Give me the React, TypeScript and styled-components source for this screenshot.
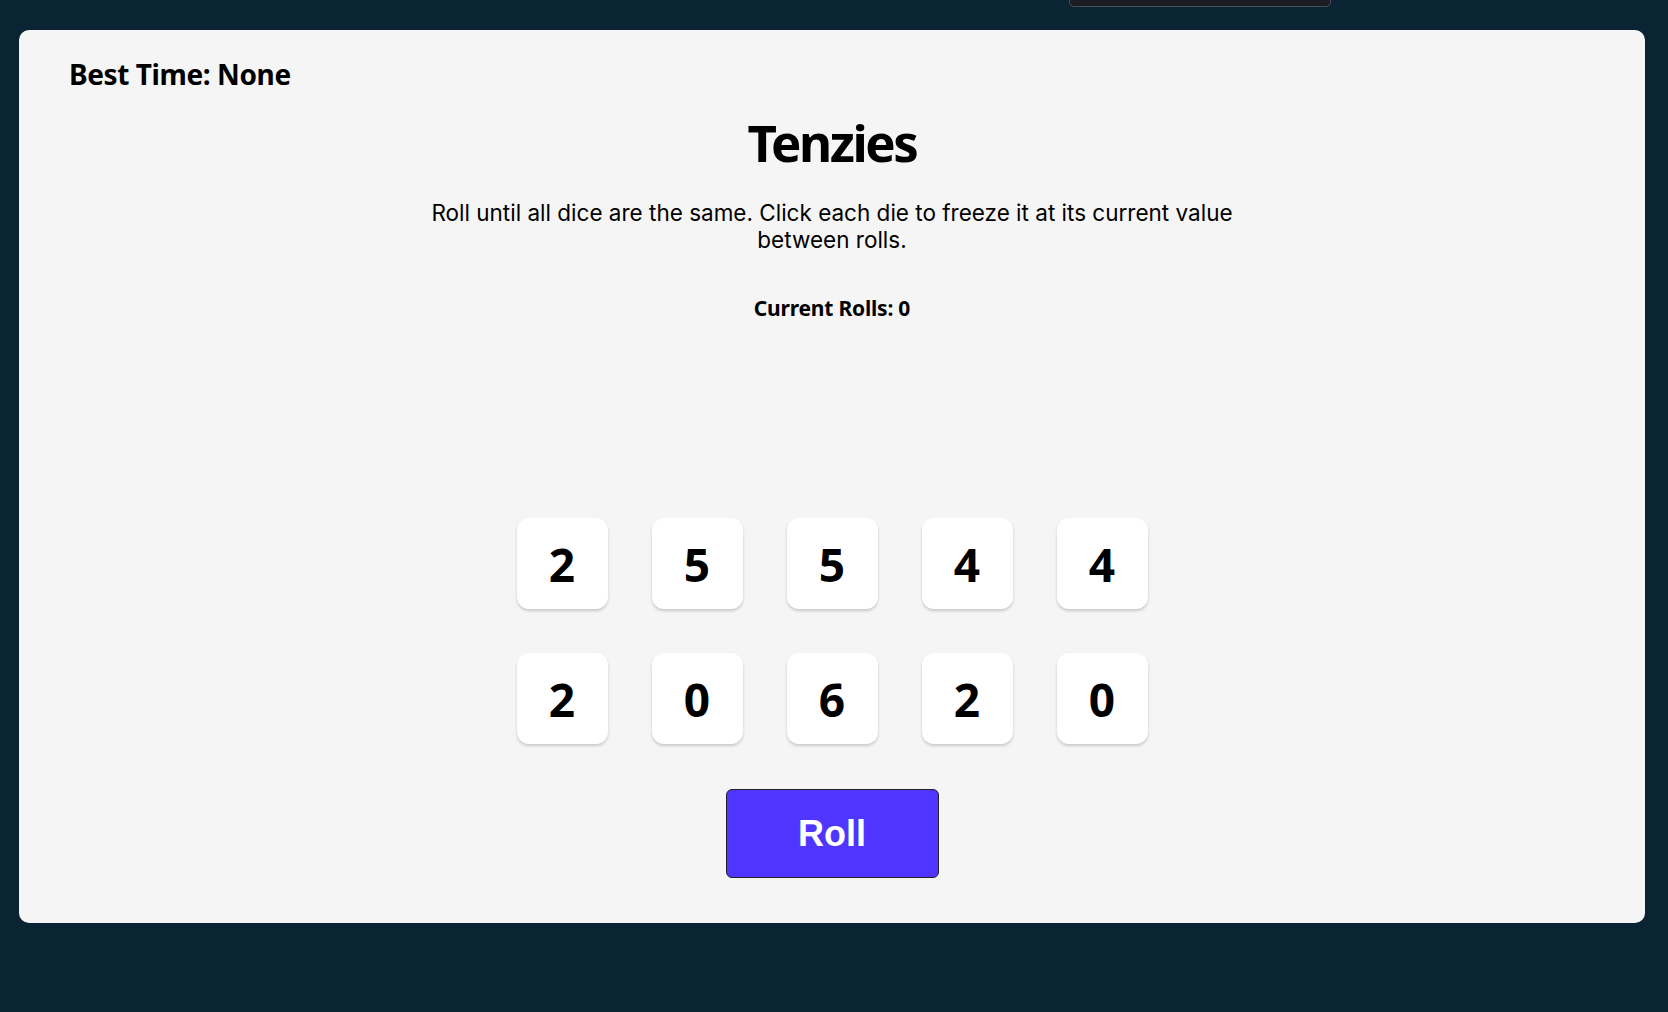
import React from "react";
import styled, { createGlobalStyle } from "styled-components";

const GlobalStyle = createGlobalStyle`
  html, body {
    margin: 0;
    padding: 0;
    background: #0b2434;
  }
  body {
    min-height: 1012px;
    font-family: "Noto Sans", "Open Sans", sans-serif;
  }
  * { box-sizing: border-box; }
`;

const Page = styled.div`
  position: relative;
  width: 1668px;
  height: 1012px;
  padding: 30px 23px 0 19px;
  overflow: hidden;
`;

const TopTab = styled.div`
  position: absolute;
  left: 1069px;
  top: -10px;
  width: 262px;
  height: 17px;
  background: #1b1d23;
  border: 1px solid #4a4e57;
  border-radius: 0 0 5px 5px;
`;

const Panel = styled.main`
  background: #f5f5f5;
  border-radius: 10px;
  height: 893px;
  padding: 30px 50px 44px 50px;
  display: flex;
  flex-direction: column;
  align-items: center;
`;

const BestTime = styled.h3`
  align-self: flex-start;
  margin: 0;
  font-family: "Noto Sans", sans-serif;
  font-weight: 700;
  font-size: 28px;
  letter-spacing: -0.4px;
  line-height: 1;
  color: #000;
`;

const Title = styled.h1`
  margin: 29px 0 0 0;
  font-family: "Noto Sans", sans-serif;
  font-weight: 700;
  font-size: 51px;
  letter-spacing: -2.4px;
  line-height: 1;
  color: #000;
`;

const Description = styled.p`
  margin: 31px 0 0 0;
  width: 840px;
  text-align: center;
  font-family: Inter, sans-serif;
  font-weight: 400;
  font-size: 22.5px;
  line-height: 27px;
  color: #000;
`;

const Rolls = styled.h4`
  margin: 45px 0 0 0;
  font-family: "Noto Sans", sans-serif;
  font-weight: 700;
  font-size: 21px;
  letter-spacing: -0.2px;
  line-height: 1;
  color: #000;
`;

const DiceGrid = styled.div`
  margin-top: auto;
  display: grid;
  grid-template-columns: repeat(5, 91px);
  grid-auto-rows: 91px;
  gap: 44px;
`;

const Die = styled.button<{ $held?: boolean }>`
  width: 91px;
  height: 91px;
  border: none;
  border-radius: 12px;
  background: ${(p) => (p.$held ? "#59e391" : "#ffffff")};
  box-shadow: 0 2px 3px rgba(0, 0, 0, 0.18);
  display: flex;
  align-items: center;
  justify-content: center;
  font-family: "Noto Sans", sans-serif;
  font-weight: 700;
  font-size: 46px;
  color: #000;
  padding: 0;
  cursor: pointer;
`;

const RollButton = styled.button`
  margin-top: 45px;
  margin-bottom: 1px;
  width: 213px;
  height: 89px;
  background: #5035ff;
  border: 1px solid #222;
  border-radius: 6px;
  color: #fff;
  font-family: "Liberation Sans", Arial, sans-serif;
  font-weight: 700;
  font-size: 36px;
  cursor: pointer;
`;

const dice = [2, 5, 5, 4, 4, 2, 0, 6, 2, 0];

export default function App() {
  return (
    <>
      <GlobalStyle />
      <Page>
        <TopTab />
        <Panel>
          <BestTime>Best Time: None</BestTime>
          <Title>Tenzies</Title>
          <Description>
            Roll until all dice are the same. Click each die to freeze it at its current value
            between rolls.
          </Description>
          <Rolls>Current Rolls: 0</Rolls>
          <DiceGrid>
            {dice.map((v, i) => (
              <Die key={i}>{v}</Die>
            ))}
          </DiceGrid>
          <RollButton>Roll</RollButton>
        </Panel>
      </Page>
    </>
  );
}
